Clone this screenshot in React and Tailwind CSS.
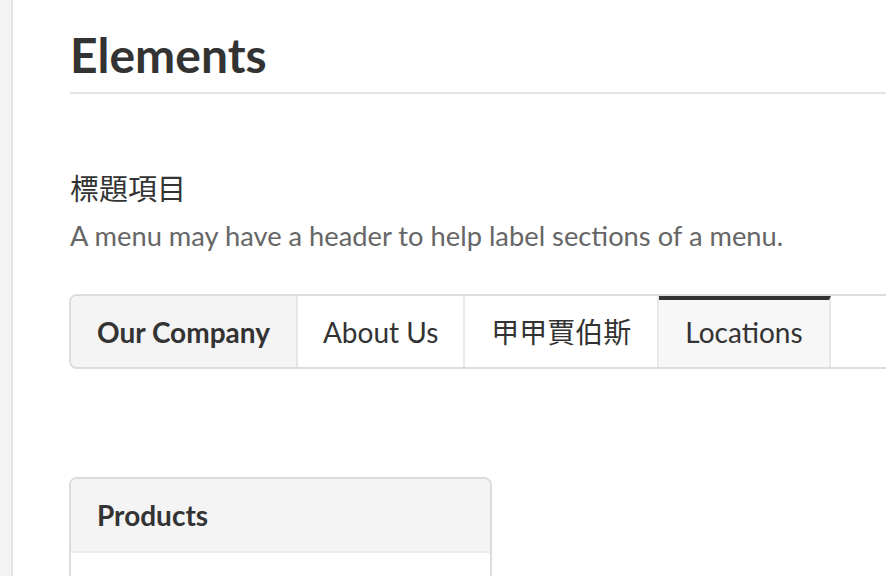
import React from "react";

const items = [
  { label: "About Us", pad: "px-[25px]" },
  { label: "甲甲賈伯斯", pad: "px-[26px]" },
  { label: "Locations", active: true },
];

export default function App() {
  return (
    <div
      className="flex min-h-screen bg-white text-[#333]"
      style={{ fontFamily: "Lato, 'Noto Sans CJK TC', sans-serif" }}
    >
      {/* barra lateral */}
      <div className="w-[13px] shrink-0 bg-[#f4f4f4] border-r-2 border-[#e4e4e4]" />

      <main className="flex-1 pl-[57px] pt-[25px] overflow-hidden">
        <h1 className="text-[48px] font-bold leading-[60px] pb-[7px] border-b-2 border-[#e3e3e3]">
          Elements
        </h1>

        <h2 className="mt-[78px] text-[29px] leading-[34px] font-normal">標題項目</h2>
        <p className="mt-[13px] text-[27.3px] leading-[34px] text-[#666]">
          A menu may have a header to help label sections of a menu.
        </p>

        <nav className="mt-[41px] flex h-[75px] w-[900px] -ml-px border-2 border-[#dcdcdd] rounded-l-[8px] text-[28px] overflow-hidden">
          <div className="flex items-center px-[26px] bg-[#f4f4f4] font-bold border-r-2 border-[#e6e6e6]">
            Our Company
          </div>
          {items.map((it) => (
            <div
              key={it.label}
              className={
                it.active
                  ? "flex items-center pb-[4px] px-[26px] bg-[#f7f7f7] border-t-4 border-t-[#333] border-r-2 border-r-[#e6e6e6]"
                  : "flex items-center border-r-2 border-[#e9e9e9] " + it.pad
              }
            >
              {it.label}
            </div>
          ))}
        </nav>

        <section className="mt-[108px] w-[423px] -ml-px border-2 border-[#dcdcdd] rounded-[8px] overflow-hidden">
          <div className="h-[74px] flex items-center px-[26px] bg-[#f4f4f4] border-b-2 border-[#ececec] font-bold text-[28px]">
            Products
          </div>
          <div className="h-[40px] bg-white" />
        </section>
      </main>
    </div>
  );
}
